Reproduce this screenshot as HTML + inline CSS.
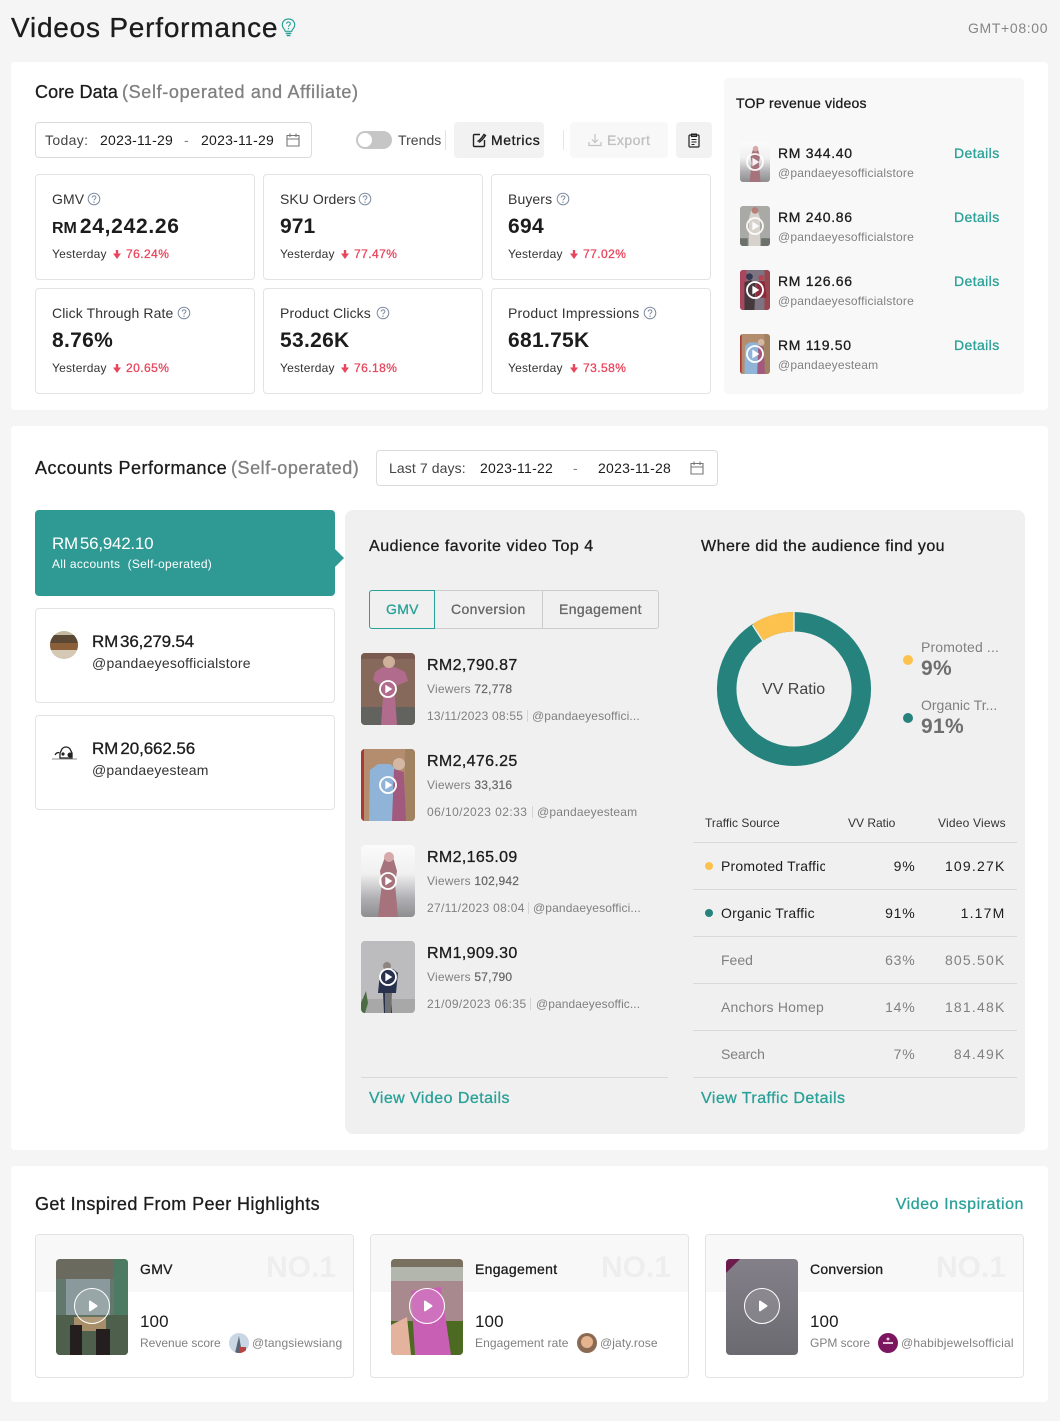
<!DOCTYPE html>
<html><head><meta charset="utf-8">
<style>
*{box-sizing:border-box;margin:0;padding:0}
html,body{width:1060px;height:1421px;overflow:hidden;background:#f5f5f5}
body{position:relative;font-family:"Liberation Sans",sans-serif;color:#1c1c1c;letter-spacing:.35px}
.t{position:absolute;white-space:nowrap;line-height:20px;font-size:14px}
.b{position:absolute}
.m{-webkit-text-stroke:.3px currentColor}
.g{color:#808080}.tl{color:#2aa198}
.card{position:absolute;background:#fff;border-radius:4px}
.box{position:absolute;background:#fff;border:1px solid #e3e3e3;border-radius:4px}
svg{position:absolute;display:block;overflow:hidden}
svg.ar{position:static;display:inline-block;vertical-align:-1px;margin-right:5px}
.r{text-align:right}
.l{position:absolute;height:1px;background:#d9d9d9;left:693px;width:324px}
.val{top:217px;font-size:21px;font-weight:bold;letter-spacing:.3px}
.yd{font-size:12px;color:#333;letter-spacing:.2px}
.dn{font-size:12px;color:#e8465c;letter-spacing:.45px;-webkit-text-stroke:.3px currentColor}
.lb{color:#333;letter-spacing:.1px}
.d{font-size:12px;letter-spacing:.33px;color:#808080}
.h{font-size:12px;letter-spacing:.13px;color:#808080}
.pc{font-size:14px;letter-spacing:.8px}
.vw{font-size:14px;letter-spacing:1.2px}
.no{top:1253px;line-height:30px;font-size:30px;font-weight:bold;color:#eeeeee;letter-spacing:0}
.amt{font-size:16px;letter-spacing:.35px;-webkit-text-stroke:.3px currentColor}
.vr{font-size:12px;letter-spacing:.2px;color:#808080}
.vr span{color:#666;-webkit-text-stroke:.2px #666}
.hd{font-size:12px;color:#333;letter-spacing:.05px}
.cn{font-size:17px;letter-spacing:.1px}
</style></head><body>
<svg width="0" height="0" style="position:absolute">
<defs>
<symbol id="pa" viewBox="0 0 54 72" preserveAspectRatio="none"><rect width="54" height="72" fill="#87695c"/><rect y="54" width="54" height="18" fill="#62625f"/><rect x="0" y="0" width="54" height="6" fill="#7a5a50"/><path d="M22 14h12l10 5 3 9-12 5-1 10 2 29H20l2-29-2-10-8-6 2-8z" fill="#b06b8d"/><circle cx="28" cy="9" r="6" fill="#cfb09a"/></symbol>
<symbol id="pb" viewBox="0 0 54 72" preserveAspectRatio="none"><rect width="54" height="72" fill="#b48d6e"/><rect width="3" height="72" fill="#a83a35"/><rect x="44" width="10" height="72" fill="#a08260"/><path d="M17 15l12 0 8 6-3 51H8L9 21z" fill="#8fb4d8"/><path d="M33 20l10 3 2 49H31z" fill="#a2597e"/><circle cx="38" cy="15" r="6" fill="#d4b8a4"/></symbol>
<symbol id="pc" viewBox="0 0 54 72" preserveAspectRatio="none"><defs><linearGradient id="gc" x1="0" y1="0" x2="0" y2="1"><stop offset="0" stop-color="#fbfbfb"/><stop offset=".4" stop-color="#f0f0f0"/><stop offset=".75" stop-color="#aeaeb2"/><stop offset="1" stop-color="#8e8e90"/></linearGradient></defs><rect width="54" height="72" fill="url(#gc)"/><path d="M24 12h8l4 14-2 12 3 34H17l4-34-2-12z" fill="#a6727c"/><circle cx="28" cy="12" r="5" fill="#d7a9a8"/></symbol>
<symbol id="pd" viewBox="0 0 54 72" preserveAspectRatio="none"><rect width="54" height="72" fill="#bcbcbe"/><rect y="58" width="54" height="14" fill="#a8a8a8"/><path d="M24 28h8l5 4-2 20h-5l1 20h-8l-1-20h-5l2-20z" fill="#28324f"/><path d="M24 52h7l-1 20h-6z" fill="#6f7072"/><circle cx="26" cy="25" r="4" fill="#8d8680"/><path d="M0 62l5-12 2 12-3 10H0z" fill="#4b6b45"/></symbol>
<symbol id="pe" viewBox="0 0 54 72" preserveAspectRatio="none"><rect width="54" height="72" fill="#a9a9a5"/><path d="M20 8h12l4 14 0 50H16V22z" fill="#d8d2cc"/><circle cx="27" cy="8" r="6" fill="#b87f78"/><rect y="58" width="14" height="14" fill="#6d716c"/><rect x="38" y="58" width="16" height="14" fill="#6d716c"/></symbol>
<symbol id="pf" viewBox="0 0 54 72" preserveAspectRatio="none"><rect width="54" height="72" fill="#7c7480"/><rect width="12" height="72" fill="#a8475e"/><rect x="44" width="10" height="72" fill="#97454f"/><path d="M8 22l12-4 8 6-2 48H8z" fill="#45393e"/><path d="M30 20h14l4 30H28z" fill="#8c2a3c"/><circle cx="17" cy="12" r="6" fill="#31384f"/><circle cx="38" cy="14" r="5" fill="#b04553"/></symbol>
<symbol id="pl" viewBox="0 0 30 30"><circle cx="15" cy="15" r="12" fill="none" stroke="#fff" stroke-width="2.800"/><path d="M11 8.500l10.500 6.500-10.500 6.500z" fill="#fff"/></symbol>
<symbol id="pk" viewBox="0 0 36 36"><circle cx="18" cy="18" r="17.500" fill="rgba(255,255,255,.12)" stroke="#fff" stroke-width="1"/><path d="M15 13.500c0-.8.8-1.200 1.400-.8l6.600 4.400c.6.4.6 1.300 0 1.700l-6.600 4.400c-.6.4-1.400 0-1.400-.8z" fill="#fff"/></symbol>
<symbol id="q" viewBox="0 0 14 14"><circle cx="7" cy="7" r="5.800" fill="none" stroke="#7d8ba0" stroke-width="1"/><path d="M5.200 5.600c0-2.300 3.700-2.200 3.700 0 0 1.400-1.900 1.300-1.900 2.800" fill="none" stroke="#7d8ba0" stroke-width="1"/><circle cx="7" cy="10.200" r=".7" fill="#7d8ba0"/></symbol>
<symbol id="cal" viewBox="0 0 16 16"><path d="M2 3.500h12v10.500H2zM2 7h12M5 1.500v3.500M11 1.500v3.500" fill="none" stroke="#777" stroke-width="1.100"/></symbol>
<symbol id="dw" viewBox="0 0 8 9"><path d="M2.800 0h2.400v3.500H8L4 9 0 3.500h2.800z" fill="#e8465c"/></symbol>
</defs></svg>

<div class="t m" style="left:11px;top:12px;font-size:28px;line-height:32px;letter-spacing:.78px">Videos Performance</div>
<svg style="left:281px;top:18px" width="15" height="19" viewBox="0 0 15 19"><path d="M7.500 1C3.900 1 1.300 3.600 1.300 6.900c0 2.400 1.400 3.700 2.500 5l.4 1.400h6.600l.4-1.400c1.100-1.300 2.500-2.600 2.500-5C13.700 3.600 11.100 1 7.500 1z" fill="none" stroke="#2aa198" stroke-width="1.200"/><path d="M5.600 5.800c0-2.300 3.800-2.300 3.800 0 0 1.500-1.900 1.300-1.900 3" fill="none" stroke="#2aa198" stroke-width="1.100"/><circle cx="7.500" cy="10.600" r=".7" fill="#2aa198"/><rect x="4.500" y="14.600" width="6" height="1.500" rx=".7" fill="#2aa198"/><rect x="5.500" y="16.800" width="4" height="1.500" rx=".7" fill="#2aa198"/></svg>
<div class="t g" style="left:968px;top:18px;font-size:14px;letter-spacing:.65px;color:#858585">GMT+08:00</div>

<div class="card" style="left:11px;top:62px;width:1037px;height:348px"></div>
<div class="card" style="left:11px;top:426px;width:1037px;height:724px"></div>
<div class="card" style="left:11px;top:1166px;width:1037px;height:236px"></div>

<!-- Core -->
<div class="t m" style="left:35px;top:82px;font-size:18px;letter-spacing:.1px">Core Data</div>
<div class="t m" style="left:122px;top:82px;font-size:18px;color:#808080;letter-spacing:.65px">(Self-operated and Affiliate)</div>
<div class="box" style="left:35px;top:122px;width:277px;height:36px;border-color:#dcdcdc"></div>
<div class="t" style="left:45px;top:130px;color:#444">Today:</div>
<div class="t" style="left:100px;top:130px;letter-spacing:.25px">2023-11-29</div>
<div class="t g" style="left:184px;top:130px">-</div>
<div class="t" style="left:201px;top:130px;letter-spacing:.25px">2023-11-29</div>
<svg style="left:285px;top:132px" width="16" height="16"><use href="#cal"/></svg>
<div class="b" style="left:356px;top:131px;width:36px;height:18px;border-radius:9px;background:#c6c6c6"></div>
<div class="b" style="left:358px;top:133px;width:14px;height:14px;border-radius:50%;background:#fff"></div>
<div class="t" style="left:398px;top:130px;color:#444;letter-spacing:.05px">Trends</div>
<div class="b" style="left:445px;top:130px;width:1px;height:20px;background:#e2e2e2"></div>
<div class="b" style="left:454px;top:122px;width:90px;height:36px;border-radius:4px;background:#f2f2f2"></div>
<svg style="left:472px;top:132px" width="15" height="16" viewBox="0 0 15 16"><path d="M8 2.500H2.500a1 1 0 0 0-1 1V13.500a1 1 0 0 0 1 1H11.500a1 1 0 0 0 1-1V8" fill="none" stroke="#222" stroke-width="1.400"/><path d="M5.500 9.500c2-1 4.500-4 6.500-7l1.500 1c-2 3-4.500 5.500-6.500 7" fill="none" stroke="#222" stroke-width="1.400"/></svg>
<div class="t m" style="left:491px;top:130px;letter-spacing:.6px">Metrics</div>
<div class="b" style="left:563px;top:130px;width:1px;height:20px;background:#e6e6e6"></div>
<div class="b" style="left:570px;top:122px;width:98px;height:36px;border-radius:4px;background:#f8f8f8"></div>
<svg style="left:588px;top:133px" width="14" height="14" viewBox="0 0 14 14"><path d="M7 1v8M4 6.500L7 9.500l3-3M1 9v3.500h12V9" fill="none" stroke="#c2c2c2" stroke-width="1.200"/></svg>
<div class="t m" style="left:607px;top:130px;color:#c0c0c0;letter-spacing:.5px">Export</div>
<div class="b" style="left:676px;top:122px;width:36px;height:36px;border-radius:4px;background:#f2f2f2"></div>
<svg style="left:687px;top:133px" width="14" height="15" viewBox="0 0 14 15"><rect x="2" y="2" width="10" height="12" rx="1" fill="none" stroke="#222" stroke-width="1.200"/><path d="M4.500 1h5v2.500h-5zM4.500 6.500h5M4.500 9h5M4.500 11.500h3" fill="none" stroke="#222" stroke-width="1.100"/></svg>

<!-- metric cards -->
<div class="box" style="left:35px;top:174px;width:220px;height:106px"></div>
<div class="box" style="left:263px;top:174px;width:220px;height:106px"></div>
<div class="box" style="left:491px;top:174px;width:220px;height:106px"></div>
<div class="box" style="left:35px;top:288px;width:220px;height:106px"></div>
<div class="box" style="left:263px;top:288px;width:220px;height:106px"></div>
<div class="box" style="left:491px;top:288px;width:220px;height:106px"></div>

<div class="t lb" style="left:52px;top:189px">GMV</div><svg style="left:87px;top:192px" width="14" height="14"><use href="#q"/></svg>
<div class="t val" style="left:52px;letter-spacing:.7px"><span style="font-size:16px;letter-spacing:0;margin-right:3px">RM</span>24,242.26</div>
<div class="t yd" style="left:52px;top:244px">Yesterday</div>
<div class="t dn" style="left:113px;top:244px"><svg class="ar" width="8" height="9"><use href="#dw"/></svg>76.24%</div>

<div class="t lb" style="left:280px;top:189px;letter-spacing:.05px">SKU Orders</div><svg style="left:358px;top:192px" width="14" height="14"><use href="#q"/></svg>
<div class="t val" style="left:280px;letter-spacing:.1px">971</div>
<div class="t yd" style="left:280px;top:244px">Yesterday</div>
<div class="t dn" style="left:341px;top:244px"><svg class="ar" width="8" height="9"><use href="#dw"/></svg>77.47%</div>

<div class="t lb" style="left:508px;top:189px">Buyers</div><svg style="left:556px;top:192px" width="14" height="14"><use href="#q"/></svg>
<div class="t val" style="left:508px">694</div>
<div class="t yd" style="left:508px;top:244px">Yesterday</div>
<div class="t dn" style="left:570px;top:244px"><svg class="ar" width="8" height="9"><use href="#dw"/></svg>77.02%</div>

<div class="t lb" style="left:52px;top:303px">Click Through Rate</div><svg style="left:177px;top:306px" width="14" height="14"><use href="#q"/></svg>
<div class="t val" style="left:52px;top:331px">8.76%</div>
<div class="t yd" style="left:52px;top:358px">Yesterday</div>
<div class="t dn" style="left:113px;top:358px"><svg class="ar" width="8" height="9"><use href="#dw"/></svg>20.65%</div>

<div class="t lb" style="left:280px;top:303px">Product Clicks</div><svg style="left:376px;top:306px" width="14" height="14"><use href="#q"/></svg>
<div class="t val" style="left:280px;top:331px">53.26K</div>
<div class="t yd" style="left:280px;top:358px">Yesterday</div>
<div class="t dn" style="left:341px;top:358px"><svg class="ar" width="8" height="9"><use href="#dw"/></svg>76.18%</div>

<div class="t lb" style="left:508px;top:303px;letter-spacing:.2px">Product Impressions</div><svg style="left:643px;top:306px" width="14" height="14"><use href="#q"/></svg>
<div class="t val" style="left:508px;top:331px">681.75K</div>
<div class="t yd" style="left:508px;top:358px">Yesterday</div>
<div class="t dn" style="left:570px;top:358px"><svg class="ar" width="8" height="9"><use href="#dw"/></svg>73.58%</div>

<!-- top revenue -->
<div class="b" style="left:724px;top:78px;width:300px;height:316px;background:#f8f8f8;border-radius:4px"></div>
<div class="t m" style="left:736px;top:93px;letter-spacing:.2px">TOP revenue videos</div>

<svg style="left:740px;top:142px;border-radius:3px" width="30" height="40"><use href="#pc" width="30" height="40"/><use href="#pl" x="5" y="10" width="20" height="20" opacity=".9"/></svg>
<div class="t m" style="left:778px;top:143px;letter-spacing:.7px">RM 344.40</div>
<div class="t g" style="left:778px;top:163px;font-size:12px;letter-spacing:.2px">@pandaeyesofficialstore</div>
<div class="t m tl" style="left:954px;top:143px;letter-spacing:.4px">Details</div>

<svg style="left:740px;top:206px;border-radius:3px" width="30" height="40"><use href="#pe" width="30" height="40"/><use href="#pl" x="5" y="10" width="20" height="20" opacity=".9"/></svg>
<div class="t m" style="left:778px;top:207px;letter-spacing:.7px">RM 240.86</div>
<div class="t g" style="left:778px;top:227px;font-size:12px;letter-spacing:.2px">@pandaeyesofficialstore</div>
<div class="t m tl" style="left:954px;top:207px;letter-spacing:.4px">Details</div>

<svg style="left:740px;top:270px;border-radius:3px" width="30" height="40"><use href="#pf" width="30" height="40"/><use href="#pl" x="5" y="10" width="20" height="20"/></svg>
<div class="t m" style="left:778px;top:271px;letter-spacing:.7px">RM 126.66</div>
<div class="t g" style="left:778px;top:291px;font-size:12px;letter-spacing:.2px">@pandaeyesofficialstore</div>
<div class="t m tl" style="left:954px;top:271px;letter-spacing:.4px">Details</div>

<svg style="left:740px;top:334px;border-radius:3px" width="30" height="40"><use href="#pb" width="30" height="40"/><use href="#pl" x="5" y="10" width="20" height="20"/></svg>
<div class="t m" style="left:778px;top:335px;letter-spacing:.7px">RM 119.50</div>
<div class="t g" style="left:778px;top:355px;font-size:12px;letter-spacing:.2px">@pandaeyesteam</div>
<div class="t m tl" style="left:954px;top:335px;letter-spacing:.4px">Details</div>

<!-- Accounts -->
<div class="t m" style="left:35px;top:458px;font-size:18px;letter-spacing:.5px">Accounts Performance</div>
<div class="t m" style="left:231px;top:458px;font-size:18px;color:#808080;letter-spacing:.55px">(Self-operated)</div>
<div class="box" style="left:376px;top:450px;width:342px;height:36px;border-color:#dcdcdc"></div>
<div class="t" style="left:389px;top:458px;color:#444;letter-spacing:.1px">Last 7 days:</div>
<div class="t" style="left:480px;top:458px;letter-spacing:.25px">2023-11-22</div>
<div class="t g" style="left:573px;top:458px">-</div>
<div class="t" style="left:598px;top:458px;letter-spacing:.25px">2023-11-28</div>
<svg style="left:689px;top:460px" width="16" height="16"><use href="#cal"/></svg>

<div class="b" style="left:35px;top:510px;width:300px;height:86px;background:#2f9a94;border-radius:4px"></div>
<svg style="left:335px;top:549px" width="10" height="18"><path d="M0 0l9 9-9 9z" fill="#2f9a94"/></svg>
<div class="t" style="left:52px;top:534px;font-size:17px;color:#fff;letter-spacing:-.25px;word-spacing:-2.500px">RM 56,942.10</div>
<div class="t" style="left:52px;top:554px;font-size:12px;color:#fff;letter-spacing:.3px">All accounts &nbsp;(Self-operated)</div>

<div class="box" style="left:35px;top:608px;width:300px;height:95px"></div>
<svg style="left:50px;top:631px;border-radius:50%" width="28" height="28"><rect width="28" height="28" fill="#c5b8a2"/><rect y="4" width="28" height="8" fill="#5b4834"/><rect y="12" width="28" height="7" fill="#8a5f3a"/><rect y="19" width="28" height="9" fill="#d5c8b4"/></svg>
<div class="t m" style="left:92px;top:632px;font-size:17px;letter-spacing:-.2px;word-spacing:-2.500px">RM 36,279.54</div>
<div class="t" style="left:92px;top:653px;font-size:14px;color:#333;letter-spacing:.24px">@pandaeyesofficialstore</div>

<div class="box" style="left:35px;top:715px;width:300px;height:95px"></div>
<svg style="left:52px;top:745px" width="25" height="15" viewBox="0 0 25 15"><path d="M3 10c1-2 3-3 4-2M10 4a5 5 0 0 1 8 0l2 4v5H8V8z" fill="none" stroke="#222" stroke-width="1.300"/><circle cx="11" cy="9" r="1.600" fill="#222"/><circle cx="18" cy="10" r="2.500" fill="#222"/><path d="M0 14h25" stroke="#666" stroke-width=".7"/></svg>
<div class="t m" style="left:92px;top:739px;font-size:17px;letter-spacing:-.1px;word-spacing:-2.500px">RM 20,662.56</div>
<div class="t" style="left:92px;top:760px;font-size:14px;color:#333;letter-spacing:.2px">@pandaeyesteam</div>

<!-- Panel -->
<div class="b" style="left:345px;top:510px;width:680px;height:624px;background:#f0f0f0;border-radius:8px"></div>
<div class="t m" style="left:369px;top:537px;font-size:16px;letter-spacing:.52px">Audience favorite video Top 4</div>
<div class="t m" style="left:701px;top:537px;font-size:16px;letter-spacing:.47px">Where did the audience find you</div>
<div class="b" style="left:369px;top:590px;width:290px;height:39px;border:1px solid #ccc;border-radius:3px"></div>
<div class="b" style="left:542px;top:590px;width:1px;height:39px;background:#ccc"></div>
<div class="b" style="left:369px;top:590px;width:66px;height:39px;border:1px solid #2aa198;border-radius:3px 0 0 3px"></div>
<div class="t m tl" style="left:386px;top:599px;letter-spacing:.3px">GMV</div>
<div class="t m" style="left:451px;top:599px;color:#666;letter-spacing:.38px">Conversion</div>
<div class="t m" style="left:559px;top:599px;color:#666;letter-spacing:.35px">Engagement</div>

<svg style="left:361px;top:653px;border-radius:4px" width="54" height="72"><use href="#pa" width="54" height="72"/><use href="#pl" x="17" y="26" width="20" height="20"/></svg>
<div class="t amt" style="left:427px;top:656px">RM2,790.87</div>
<div class="t vr" style="left:427px;top:679px">Viewers <span>72,778</span></div>
<div class="t d" style="left:427px;top:706px;letter-spacing:.23px">13/11/2023 08:55</div>
<div class="b" style="left:527px;top:710px;width:1px;height:12px;background:#d4d4d4"></div>
<div class="t h" style="left:532px;top:706px">@pandaeyesoffici...</div>

<svg style="left:361px;top:749px;border-radius:4px" width="54" height="72"><use href="#pb" width="54" height="72"/><use href="#pl" x="17" y="26" width="20" height="20"/></svg>
<div class="t amt" style="left:427px;top:752px">RM2,476.25</div>
<div class="t vr" style="left:427px;top:775px">Viewers <span>33,316</span></div>
<div class="t d" style="left:427px;top:802px;letter-spacing:.43px">06/10/2023 02:33</div>
<div class="b" style="left:532px;top:806px;width:1px;height:12px;background:#d4d4d4"></div>
<div class="t h" style="left:537px;top:802px;letter-spacing:.2px">@pandaeyesteam</div>

<svg style="left:361px;top:845px;border-radius:4px" width="54" height="72"><use href="#pc" width="54" height="72"/><use href="#pl" x="17" y="26" width="20" height="20"/></svg>
<div class="t amt" style="left:427px;top:848px">RM2,165.09</div>
<div class="t vr" style="left:427px;top:871px">Viewers <span>102,942</span></div>
<div class="t d" style="left:427px;top:898px">27/11/2023 08:04</div>
<div class="b" style="left:528px;top:902px;width:1px;height:12px;background:#d4d4d4"></div>
<div class="t h" style="left:533px;top:898px">@pandaeyesoffici...</div>

<svg style="left:361px;top:941px;border-radius:4px" width="54" height="72"><use href="#pd" width="54" height="72"/><use href="#pl" x="17" y="26" width="20" height="20"/></svg>
<div class="t amt" style="left:427px;top:944px">RM1,909.30</div>
<div class="t vr" style="left:427px;top:967px">Viewers <span>57,790</span></div>
<div class="t d" style="left:427px;top:994px;letter-spacing:.38px">21/09/2023 06:35</div>
<div class="b" style="left:530px;top:998px;width:1px;height:12px;background:#d4d4d4"></div>
<div class="t h" style="left:536px;top:994px;letter-spacing:.08px">@pandaeyesoffic...</div>

<div class="b" style="left:361px;top:1077px;width:307px;height:1px;background:#d9d9d9"></div>
<div class="t m tl" style="left:369px;top:1089px;font-size:16px;letter-spacing:.45px">View Video Details</div>
<div class="t m tl" style="left:701px;top:1089px;font-size:16px;letter-spacing:.45px">View Traffic Details</div>

<!-- donut -->
<svg style="left:714px;top:609px" width="160" height="160" viewBox="0 0 160 160">
<circle cx="80" cy="80" r="67.300" fill="none" stroke="#26827d" stroke-width="19.500"/>
<circle cx="80" cy="80" r="67.300" fill="none" stroke="#fdc24e" stroke-width="19.500" stroke-dasharray="38 385" transform="rotate(-90 80 80) rotate(-32.400 80 80)"/>
<path d="M80 2V24M80 80L38.500 16M80 80" stroke="#f0f0f0" stroke-width="1.400" fill="none"/>
<circle cx="80" cy="80" r="57.300" fill="#f0f0f0"/>
</svg>
<div class="t" style="left:762px;top:680px;font-size:16px;color:#444;letter-spacing:0">VV Ratio</div>
<div class="b" style="left:903px;top:655px;width:10px;height:10px;border-radius:50%;background:#fdc24e"></div>
<div class="t g" style="left:921px;top:637px;letter-spacing:.15px">Promoted ...</div>
<div class="t" style="left:921px;top:659px;font-size:21px;font-weight:bold;color:#6e6e6e">9%</div>
<div class="b" style="left:903px;top:713px;width:10px;height:10px;border-radius:50%;background:#26827d"></div>
<div class="t g" style="left:921px;top:695px;letter-spacing:0">Organic Tr...</div>
<div class="t" style="left:921px;top:717px;font-size:21px;font-weight:bold;color:#6e6e6e">91%</div>

<div class="t hd" style="left:705px;top:813px">Traffic Source</div>
<div class="t hd" style="left:848px;top:813px;letter-spacing:0">VV Ratio</div>
<div class="t hd" style="left:938px;top:813px;letter-spacing:.2px">Video Views</div>
<div class="l" style="top:842px"></div><div class="l" style="top:889px"></div><div class="l" style="top:936px"></div><div class="l" style="top:983px"></div><div class="l" style="top:1030px"></div><div class="l" style="top:1077px"></div>

<div class="b" style="left:705px;top:862px;width:8px;height:8px;border-radius:50%;background:#fdc24e"></div>
<div class="t" style="left:721px;top:856px;width:104px;overflow:hidden;letter-spacing:.2px">Promoted Traffic</div>
<div class="t r pc" style="left:855.500px;width:60px;top:856px">9%</div>
<div class="t r vw" style="left:925.500px;width:80px;top:856px">109.27K</div>

<div class="b" style="left:705px;top:909px;width:8px;height:8px;border-radius:50%;background:#26827d"></div>
<div class="t" style="left:721px;top:903px;letter-spacing:.2px">Organic Traffic</div>
<div class="t r pc" style="left:855.500px;width:60px;top:903px">91%</div>
<div class="t r vw" style="left:925.500px;width:80px;top:903px">1.17M</div>

<div class="t g" style="left:721px;top:950px;letter-spacing:0">Feed</div>
<div class="t r g pc" style="left:855.500px;width:60px;top:950px">63%</div>
<div class="t r g vw" style="left:925.500px;width:80px;top:950px">805.50K</div>

<div class="t g" style="left:721px;top:997px;letter-spacing:.2px">Anchors Homep</div>
<div class="t r g pc" style="left:855.500px;width:60px;top:997px">14%</div>
<div class="t r g vw" style="left:925.500px;width:80px;top:997px">181.48K</div>

<div class="t g" style="left:721px;top:1044px;letter-spacing:-.1px">Search</div>
<div class="t r g pc" style="left:855.500px;width:60px;top:1044px">7%</div>
<div class="t r g vw" style="left:925.500px;width:80px;top:1044px">84.49K</div>

<!-- Peer -->
<div class="t m" style="left:35px;top:1194px;font-size:18px;letter-spacing:.39px">Get Inspired From Peer Highlights</div>
<div class="t m tl r" style="left:824px;width:200px;top:1195px;font-size:16px;letter-spacing:.55px">Video Inspiration</div>

<div class="box" style="left:35px;top:1234px;width:319px;height:144px"></div>
<div class="b" style="left:36px;top:1235px;width:317px;height:57px;background:#f8f8f8;border-radius:3px 3px 0 0"></div>
<div class="t no" style="right:724px">NO.1</div>
<svg style="left:56px;top:1259px;border-radius:4px" width="72" height="96" viewBox="0 0 72 96"><rect width="72" height="96" fill="#62786f"/><rect width="72" height="20" fill="#6a6a5e"/><rect x="10" y="20" width="44" height="36" fill="#8a9a9c"/><rect x="58" width="14" height="96" fill="#4d7a62"/><rect x="0" y="56" width="72" height="40" fill="#4e5f4c"/><rect x="18" y="58" width="32" height="14" fill="#a88e68"/><rect x="14" y="66" width="12" height="30" fill="#241e1e"/><rect x="40" y="70" width="14" height="26" fill="#241e1e"/><use href="#pk" x="18" y="29" width="36" height="36"/></svg>
<div class="t m" style="left:140px;top:1259px;letter-spacing:.3px">GMV</div>
<div class="t cn" style="left:140px;top:1312px">100</div>
<div class="t g" style="left:140px;top:1333px;font-size:12px;letter-spacing:0">Revenue score</div>
<svg style="left:229px;top:1333px;border-radius:50%" width="20" height="20"><rect width="20" height="20" fill="#c9d6e4"/><path d="M10 3l3 17H6z" fill="#5a6474"/><rect x="10" y="14" width="7" height="6" fill="#b8433f"/></svg>
<div class="t g" style="left:252px;top:1333px;font-size:12px;letter-spacing:.15px">@tangsiewsiang</div>

<div class="box" style="left:370px;top:1234px;width:319px;height:144px"></div>
<div class="b" style="left:371px;top:1235px;width:317px;height:57px;background:#f8f8f8;border-radius:3px 3px 0 0"></div>
<div class="t no" style="right:389px">NO.1</div>
<svg style="left:391px;top:1259px;border-radius:4px" width="72" height="96" viewBox="0 0 72 96"><rect width="72" height="96" fill="#a88a8e"/><rect width="72" height="22" fill="#b2b6ac"/><rect y="0" width="72" height="8" fill="#7a705f"/><rect y="62" width="72" height="34" fill="#4c6a22"/><path d="M0 66l16-8 4 38H0z" fill="#e3b39e"/><path d="M20 32l30-4 10 68H24z" fill="#c95fb5"/><use href="#pk" x="18" y="29" width="36" height="36"/></svg>
<div class="t m" style="left:475px;top:1259px;letter-spacing:.3px">Engagement</div>
<div class="t cn" style="left:475px;top:1312px">100</div>
<div class="t g" style="left:475px;top:1333px;font-size:12px;letter-spacing:.1px">Engagement rate</div>
<svg style="left:577px;top:1333px;border-radius:50%" width="20" height="20"><rect width="20" height="20" fill="#8a6a52"/><circle cx="10" cy="9" r="6" fill="#e5b48e"/></svg>
<div class="t g" style="left:600px;top:1333px;font-size:12px;letter-spacing:.1px">@jaty.rose</div>

<div class="box" style="left:705px;top:1234px;width:319px;height:144px"></div>
<div class="b" style="left:706px;top:1235px;width:317px;height:57px;background:#f8f8f8;border-radius:3px 3px 0 0"></div>
<div class="t no" style="right:54px">NO.1</div>
<svg style="left:726px;top:1259px;border-radius:4px" width="72" height="96" viewBox="0 0 72 96"><defs><linearGradient id="gv" x1="0" y1="0" x2="0" y2="1"><stop offset="0" stop-color="#84808a"/><stop offset="1" stop-color="#6b6a70"/></linearGradient></defs><rect width="72" height="96" fill="url(#gv)"/><path d="M0 0h14L0 14z" fill="#6d1b4d"/><use href="#pk" x="18" y="29" width="36" height="36"/></svg>
<div class="t m" style="left:810px;top:1259px;letter-spacing:.25px">Conversion</div>
<div class="t cn" style="left:810px;top:1312px">100</div>
<div class="t g" style="left:810px;top:1333px;font-size:12px;letter-spacing:0">GPM score</div>
<svg style="left:878px;top:1333px;border-radius:50%" width="20" height="20"><rect width="20" height="20" fill="#7b1560"/><rect x="5" y="9" width="10" height="2" fill="#e6c7db"/><circle cx="10" cy="6" r="1.500" fill="#e6c7db"/></svg>
<div class="t g" style="left:901px;top:1333px;font-size:12px;letter-spacing:.2px">@habibjewelsofficial</div>
</body></html>
